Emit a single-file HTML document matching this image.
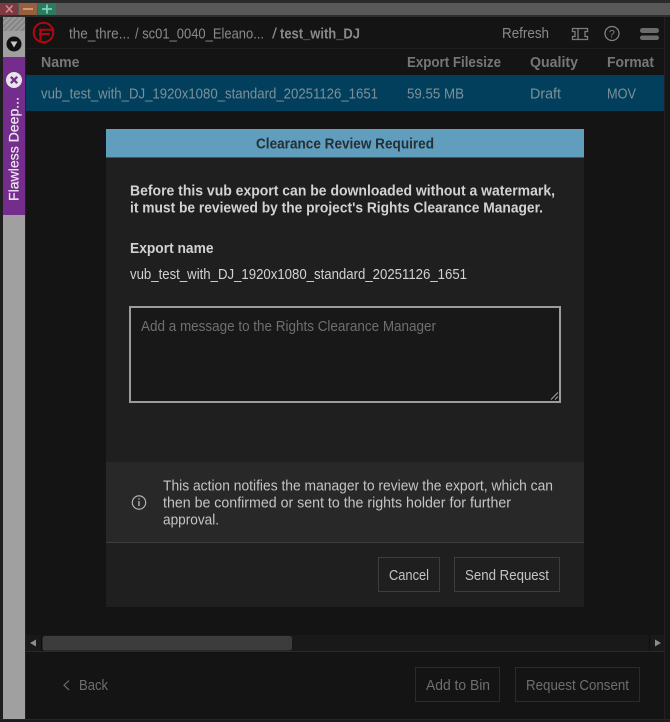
<!DOCTYPE html>
<html><head><meta charset="utf-8"><title>Clearance Review Required</title>
<style>
html,body{margin:0;padding:0;background:#141414;width:670px;height:722px;overflow:hidden}
svg{display:block}
text{font-family:"Liberation Sans",Arial,sans-serif;font-size:14.4px}
.b{font-weight:bold}
</style></head><body>
<svg width="670" height="722" viewBox="0 0 670 722" xmlns="http://www.w3.org/2000/svg">
<defs><pattern id="h" width="4" height="4" patternUnits="userSpaceOnUse" patternTransform="rotate(45)"><rect width="4" height="4" fill="#9a9a9a"/><rect width="2" height="4" fill="#858585"/></pattern></defs>
<rect width="670" height="722" fill="#141414"/>
<!-- title bar -->
<rect width="670" height="3" fill="#2a2a2a"/>
<rect y="3" width="670" height="13" fill="#585858"/>
<rect y="15" width="670" height="2" fill="#2e2e2e"/>
<rect y="3" width="18" height="12" fill="#7d3a40"/>
<rect x="19" y="3" width="18" height="12" fill="#96603f"/>
<rect x="38" y="3" width="18" height="12" fill="#2d7a62"/>
<path d="M6 5.5l6.500 7M12.500 5.500l-6.500 7" stroke="#d88a8e" stroke-width="1.500" fill="none"/>
<path d="M23 9h10" stroke="#d9a47f" stroke-width="1.700"/>
<path d="M42 9h10M47 4.500v9" stroke="#7fd6b7" stroke-width="1.700"/>
<!-- sidebar -->
<rect y="17" width="3" height="705" fill="#1e1e1e"/>
<rect x="3" y="17" width="22" height="702" fill="#a0a0a0"/>
<rect x="3" y="17" width="22" height="14" fill="url(#h)"/>
<rect x="3" y="57" width="22" height="158" fill="#742d8c"/>
<rect x="25" y="17" width="1" height="702" fill="#222"/>
<circle cx="14" cy="44" r="7.500" fill="#111"/>
<path d="M10.500 41.500h7l-3.500 6z" fill="#c8c8c8"/>
<circle cx="14" cy="80" r="8" fill="#e6e6e6"/>
<path d="M10.800 76.800l6.400 6.400M17.200 76.800l-6.400 6.400" stroke="#742d8c" stroke-width="2.200"/>
<text transform="translate(18.500 201) rotate(-90)" fill="#ece4ef" stroke="#ece4ef" stroke-width="0.250" style="font-size:14px" textLength="104" lengthAdjust="spacingAndGlyphs">Flawless Deep...</text>
<!-- header -->
<circle cx="43.500" cy="32.500" r="9.800" fill="none" stroke="#b00710" stroke-width="2"/>
<path d="M39 29.700h13.500M39 34h10.500M40.500 29.700v11" stroke="#b00710" stroke-width="2" fill="none"/>
<text x="69" y="38.500" fill="#8a8a8a" textLength="61" lengthAdjust="spacingAndGlyphs">the_thre...</text>
<text x="135" y="38.500" fill="#8a8a8a" textLength="129" lengthAdjust="spacingAndGlyphs">/ sc01_0040_Eleano...</text>
<text x="272" y="38.500" fill="#8a8a8a" textLength="5" lengthAdjust="spacingAndGlyphs">/</text>
<text x="280" y="38.500" fill="#8a8a8a" class="b" textLength="80" lengthAdjust="spacingAndGlyphs">test_with_DJ</text>
<text x="502" y="38" fill="#8a8a8a" textLength="47" lengthAdjust="spacingAndGlyphs">Refresh</text>
<path d="M572.500 28.500h15v3h-2.500v5h2.500v3h-15v-3h2.500v-5h-2.500z" fill="none" stroke="#7c7c7c" stroke-width="1.300"/>
<path d="M578 28.500v11" fill="none" stroke="#7c7c7c" stroke-width="1.300"/>
<circle cx="612" cy="33.500" r="7" fill="none" stroke="#828282" stroke-width="1.300"/>
<text x="608.800" y="37.500" fill="#828282" style="font-size:11px">?</text>
<rect x="640" y="28" width="19" height="5" rx="2.500" fill="#6c6c6c"/>
<rect x="640" y="35.500" width="19" height="4.500" rx="2.250" fill="#6c6c6c"/>
<rect x="26" y="48" width="638" height="1" fill="#1e1e1e"/>
<!-- table -->
<text x="41" y="67" class="b" fill="#777" textLength="38.500" lengthAdjust="spacingAndGlyphs">Name</text>
<text x="407" y="67" class="b" fill="#777" textLength="94" lengthAdjust="spacingAndGlyphs">Export Filesize</text>
<text x="530" y="67" class="b" fill="#777" textLength="48" lengthAdjust="spacingAndGlyphs">Quality</text>
<text x="607" y="67" class="b" fill="#777" textLength="47" lengthAdjust="spacingAndGlyphs">Format</text>
<rect x="26" y="75" width="638" height="36" fill="#013f5c"/>
<g fill="#7d909a">
<text x="41" y="98.500" textLength="337" lengthAdjust="spacingAndGlyphs">vub_test_with_DJ_1920x1080_standard_20251126_1651</text>
<text x="407" y="98.500" textLength="57" lengthAdjust="spacingAndGlyphs">59.55 MB</text>
<text x="530" y="98.500" textLength="31" lengthAdjust="spacingAndGlyphs">Draft</text>
<text x="607" y="98.500" textLength="29" lengthAdjust="spacingAndGlyphs">MOV</text>
</g>
<rect x="664" y="17" width="1" height="702" fill="#222"/>
<rect x="665" y="17" width="5" height="702" fill="#161616"/>
<!-- scrollbar -->
<rect x="26" y="635" width="638" height="16" fill="#191919"/>
<rect x="26" y="651" width="638" height="1" fill="#2a2a2a"/>
<rect x="41" y="635" width="1" height="16" fill="#0d0d0d"/>
<rect x="649" y="635" width="1" height="16" fill="#0d0d0d"/>
<rect x="42.500" y="636" width="249.500" height="14.500" rx="2.500" fill="#3c3c3c"/>
<path d="M36 639.500v7l-6-3.500z" fill="#8c8c8c"/>
<path d="M655 639.500v7l6-3.500z" fill="#8c8c8c"/>
<!-- footer -->
<path d="M69 680.500l-5 4.700 5 4.700" fill="none" stroke="#6a6a6a" stroke-width="1.200"/>
<text x="79" y="690" fill="#6e6e6e" textLength="29" lengthAdjust="spacingAndGlyphs">Back</text>
<rect x="415.500" y="667.500" width="84" height="34" fill="none" stroke="#2b2b2b"/>
<text x="426" y="690" fill="#6e6e6e" textLength="64" lengthAdjust="spacingAndGlyphs">Add to Bin</text>
<rect x="515.500" y="667.500" width="124" height="34" fill="none" stroke="#2b2b2b"/>
<text x="526" y="690" fill="#6e6e6e" textLength="103" lengthAdjust="spacingAndGlyphs">Request Consent</text>
<rect y="719" width="670" height="1" fill="#262626"/>
<rect y="720" width="670" height="2" fill="#1c1c1c"/>
<!-- modal -->
<rect x="106" y="129" width="478" height="478" fill="#1f1f1f"/>
<rect x="106" y="129" width="478" height="28" fill="#619dbd"/>
<rect x="106" y="157" width="478" height="1" fill="#3c5866"/>
<text x="256" y="148.500" class="b" fill="#243038" textLength="178" lengthAdjust="spacingAndGlyphs">Clearance Review Required</text>
<text x="130" y="195.500" class="b" fill="#d2d2d2" textLength="425" lengthAdjust="spacingAndGlyphs">Before this vub export can be downloaded without a watermark,</text>
<text x="130" y="212.500" class="b" fill="#d2d2d2" textLength="413" lengthAdjust="spacingAndGlyphs">it must be reviewed by the project's Rights Clearance Manager.</text>
<text x="130" y="253" class="b" fill="#d2d2d2" textLength="83.500" lengthAdjust="spacingAndGlyphs">Export name</text>
<text x="130" y="279" fill="#d2d2d2" textLength="337" lengthAdjust="spacingAndGlyphs">vub_test_with_DJ_1920x1080_standard_20251126_1651</text>
<rect x="130" y="307" width="430" height="95" fill="#181818" stroke="#9c9c9c" stroke-width="2"/>
<text x="141" y="331" fill="#6f6f6f" textLength="295" lengthAdjust="spacingAndGlyphs">Add a message to the Rights Clearance Manager</text>
<path d="M551 399.500l7-7M555 399.500l3-3" stroke="#a5a5a5" stroke-width="1"/>
<rect x="106" y="462" width="478" height="80" fill="#282828"/>
<rect x="106" y="542" width="478" height="1" fill="#3e3e3e"/>
<circle cx="139" cy="502.500" r="6.700" fill="none" stroke="#bcbcbc" stroke-width="1.100"/>
<path d="M139 501v5M139 498.200v1.400" stroke="#bcbcbc" stroke-width="1.300"/>
<text x="163" y="490.500" fill="#c4c4c4" textLength="390" lengthAdjust="spacingAndGlyphs">This action notifies the manager to review the export, which can</text>
<text x="163" y="507.500" fill="#c4c4c4" textLength="348" lengthAdjust="spacingAndGlyphs">then be confirmed or sent to the rights holder for further</text>
<text x="163" y="524.500" fill="#c4c4c4" textLength="56" lengthAdjust="spacingAndGlyphs">approval.</text>
<rect x="378.500" y="557.500" width="61" height="34" fill="none" stroke="#3d3d3d"/>
<text x="389" y="580" fill="#c4c4c4" textLength="40" lengthAdjust="spacingAndGlyphs">Cancel</text>
<rect x="454.500" y="557.500" width="105" height="34" fill="none" stroke="#3d3d3d"/>
<text x="465" y="580" fill="#c4c4c4" textLength="84" lengthAdjust="spacingAndGlyphs">Send Request</text>
</svg>
</body></html>
